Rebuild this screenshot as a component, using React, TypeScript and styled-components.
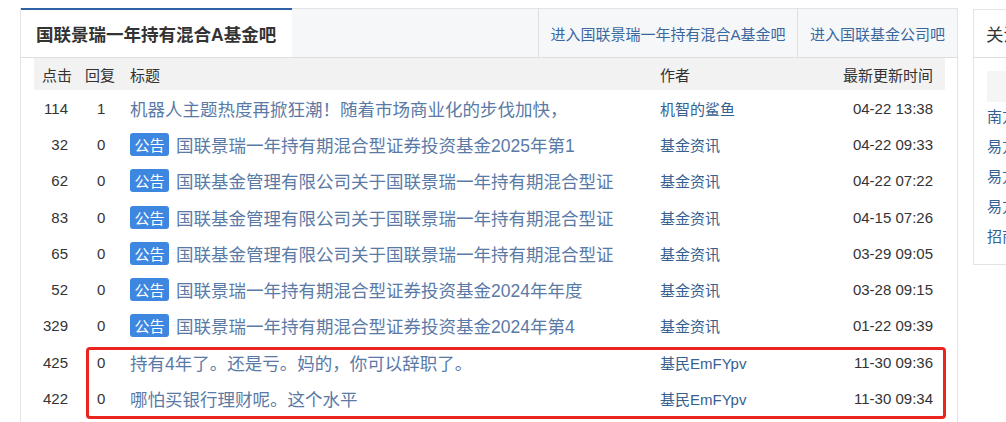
import styled, { createGlobalStyle } from 'styled-components';

const GlobalStyle = createGlobalStyle`
  html, body {
    margin: 0;
    padding: 0;
    background: #fff;
    overflow: hidden;
  }
  body {
    font-family: "Liberation Sans", "Noto Sans CJK SC", sans-serif;
    color: #333;
  }
`;

const ROW_H = 36.3;

type Post = {
  clicks: number;
  replies: number;
  title: string;
  notice?: boolean;
  author: string;
  time: string;
};

const posts: Post[] = [
  { clicks: 114, replies: 1, title: '机器人主题热度再掀狂潮！随着市场商业化的步伐加快，', author: '机智的鲨鱼', time: '04-22 13:38' },
  { clicks: 32, replies: 0, notice: true, title: '国联景瑞一年持有期混合型证券投资基金2025年第1', author: '基金资讯', time: '04-22 09:33' },
  { clicks: 62, replies: 0, notice: true, title: '国联基金管理有限公司关于国联景瑞一年持有期混合型证', author: '基金资讯', time: '04-22 07:22' },
  { clicks: 83, replies: 0, notice: true, title: '国联基金管理有限公司关于国联景瑞一年持有期混合型证', author: '基金资讯', time: '04-15 07:26' },
  { clicks: 65, replies: 0, notice: true, title: '国联基金管理有限公司关于国联景瑞一年持有期混合型证', author: '基金资讯', time: '03-29 09:05' },
  { clicks: 52, replies: 0, notice: true, title: '国联景瑞一年持有期混合型证券投资基金2024年年度', author: '基金资讯', time: '03-28 09:15' },
  { clicks: 329, replies: 0, notice: true, title: '国联景瑞一年持有期混合型证券投资基金2024年第4', author: '基金资讯', time: '01-22 09:39' },
  { clicks: 425, replies: 0, title: '持有4年了。还是亏。妈的，你可以辞职了。', author: '基民EmFYpv', time: '11-30 09:36' },
  { clicks: 422, replies: 0, title: '哪怕买银行理财呢。这个水平', author: '基民EmFYpv', time: '11-30 09:34' },
];

const related = [
  '南方中证500ETF联接A吧',
  '易方达蓝筹精选混合吧',
  '易方达消费行业股票吧',
  '易方达中小盘混合吧',
  '招商中证白酒指数A吧',
];

const Page = styled.div`
  display: flex;
  align-items: flex-start;
  gap: 15px;
  padding: 8px 0 0 20px;
  width: max-content;
`;

const MainPanel = styled.section`
  box-sizing: border-box;
  width: 938px;
  min-height: 430px;
  border-left: 1px solid #e3e3e3;
  border-right: 1px solid #e3e3e3;
  background: #fff;
`;

const TabBar = styled.div`
  display: flex;
  height: 50px;
  box-sizing: border-box;
  background: #f6f7f9;
  border-bottom: 1px solid #dedede;
`;

const ActiveTab = styled.div`
  box-sizing: border-box;
  width: 271px;
  display: flex;
  align-items: center;
  padding: 0 0 0 15px;
  background: #fff;
  border-top: 2px solid #2d63a6;
  font-size: 17.5px;
  font-weight: bold;
  color: #333;
`;

const TabSpacer = styled.div`
  flex: 1;
  border-top: 1px solid #e3e3e3;
`;

const TabLink = styled.a<{ $w: number }>`
  box-sizing: border-box;
  width: ${(p) => p.$w}px;
  display: flex;
  align-items: center;
  justify-content: center;
  border-top: 1px solid #e3e3e3;
  border-left: 1px solid #dedede;
  font-size: 15px;
  color: #3a679e;
  text-decoration: none;
  white-space: nowrap;
`;

const Table = styled.div`
  margin: 0 12px 0 13px;
`;

const Grid = styled.div`
  display: grid;
  grid-template-columns: 46px 50px 530px 1fr 140px;
  align-items: center;
`;

const HeadRow = styled(Grid)`
  height: 32px;
  background: #f2f2f2;
  font-size: 15px;
  color: #333;
`;

const HeadCell = styled.div<{ $pad?: number; $right?: boolean }>`
  padding-left: ${(p) => p.$pad ?? 0}px;
  padding-right: ${(p) => (p.$right ? 12 : 0)}px;
  text-align: ${(p) => (p.$right ? 'right' : 'left')};
`;

const Rows = styled.div`
  position: relative;
`;

const Row = styled(Grid)`
  height: ${ROW_H}px;
  font-size: 15px;
`;

const Clicks = styled.div`
  text-align: right;
  padding-right: 12px;
  color: #333;
`;

const Replies = styled.div`
  padding-left: 17px;
  color: #333;
`;

const TitleCell = styled.div`
  display: flex;
  align-items: center;
  gap: 7px;
  white-space: nowrap;
  overflow: hidden;
`;

const Badge = styled.span`
  display: inline-flex;
  align-items: center;
  justify-content: center;
  width: 39px;
  height: 23px;
  border-radius: 3px;
  background: #3d87e0;
  color: #fff;
  font-size: 15px;
  flex-shrink: 0;
`;

const TitleLink = styled.a`
  font-size: 17.5px;
  color: #5a7aa6;
  text-decoration: none;
`;

const Author = styled.a`
  color: #35608f;
  text-decoration: none;
`;

const Time = styled.div`
  text-align: right;
  padding-right: 12px;
  color: #333;
`;

const Highlight = styled.div`
  position: absolute;
  left: 52px;
  top: 257px;
  width: 860px;
  height: 72px;
  box-sizing: border-box;
  border: 3px solid #ea241e;
  border-radius: 4px;
  pointer-events: none;
`;

const SidePanel = styled.aside`
  box-sizing: border-box;
  width: 260px;
  margin-top: 1px;
  border: 1px solid #e3e3e3;
  background: #fff;
  padding-bottom: 12px;
`;

const SideHead = styled.div`
  height: 47px;
  display: flex;
  align-items: center;
  padding-left: 12px;
  border-bottom: 1px solid #dedede;
  font-size: 17.5px;
  color: #333;
  white-space: nowrap;
`;

const SideBox = styled.div`
  margin: 13px 13px 0;
  height: 31px;
  background: #f5f5f5;
`;

const SideLink = styled.a`
  display: block;
  padding-left: 13px;
  line-height: 30px;
  font-size: 15px;
  color: #35608f;
  text-decoration: none;
  white-space: nowrap;
`;

export default function App() {
  return (
    <>
      <GlobalStyle />
      <Page>
        <MainPanel>
          <TabBar>
            <ActiveTab>国联景瑞一年持有混合A基金吧</ActiveTab>
            <TabSpacer />
            <TabLink $w={259}>进入国联景瑞一年持有混合A基金吧</TabLink>
            <TabLink $w={160}>进入国联基金公司吧</TabLink>
          </TabBar>
          <Table>
            <HeadRow>
              <HeadCell $pad={8}>点击</HeadCell>
              <HeadCell $pad={5}>回复</HeadCell>
              <HeadCell>标题</HeadCell>
              <HeadCell>作者</HeadCell>
              <HeadCell $right>最新更新时间</HeadCell>
            </HeadRow>
            <Rows>
              {posts.map((p, i) => (
                <Row key={i}>
                  <Clicks>{p.clicks}</Clicks>
                  <Replies>{p.replies}</Replies>
                  <TitleCell>
                    {p.notice && <Badge>公告</Badge>}
                    <TitleLink href="#">{p.title}</TitleLink>
                  </TitleCell>
                  <Author href="#">{p.author}</Author>
                  <Time>{p.time}</Time>
                </Row>
              ))}
              <Highlight />
            </Rows>
          </Table>
        </MainPanel>
        <SidePanel>
          <SideHead>关注本吧的人还关注</SideHead>
          <SideBox />
          {related.map((r) => (
            <SideLink key={r} href="#">
              {r}
            </SideLink>
          ))}
        </SidePanel>
      </Page>
    </>
  );
}
